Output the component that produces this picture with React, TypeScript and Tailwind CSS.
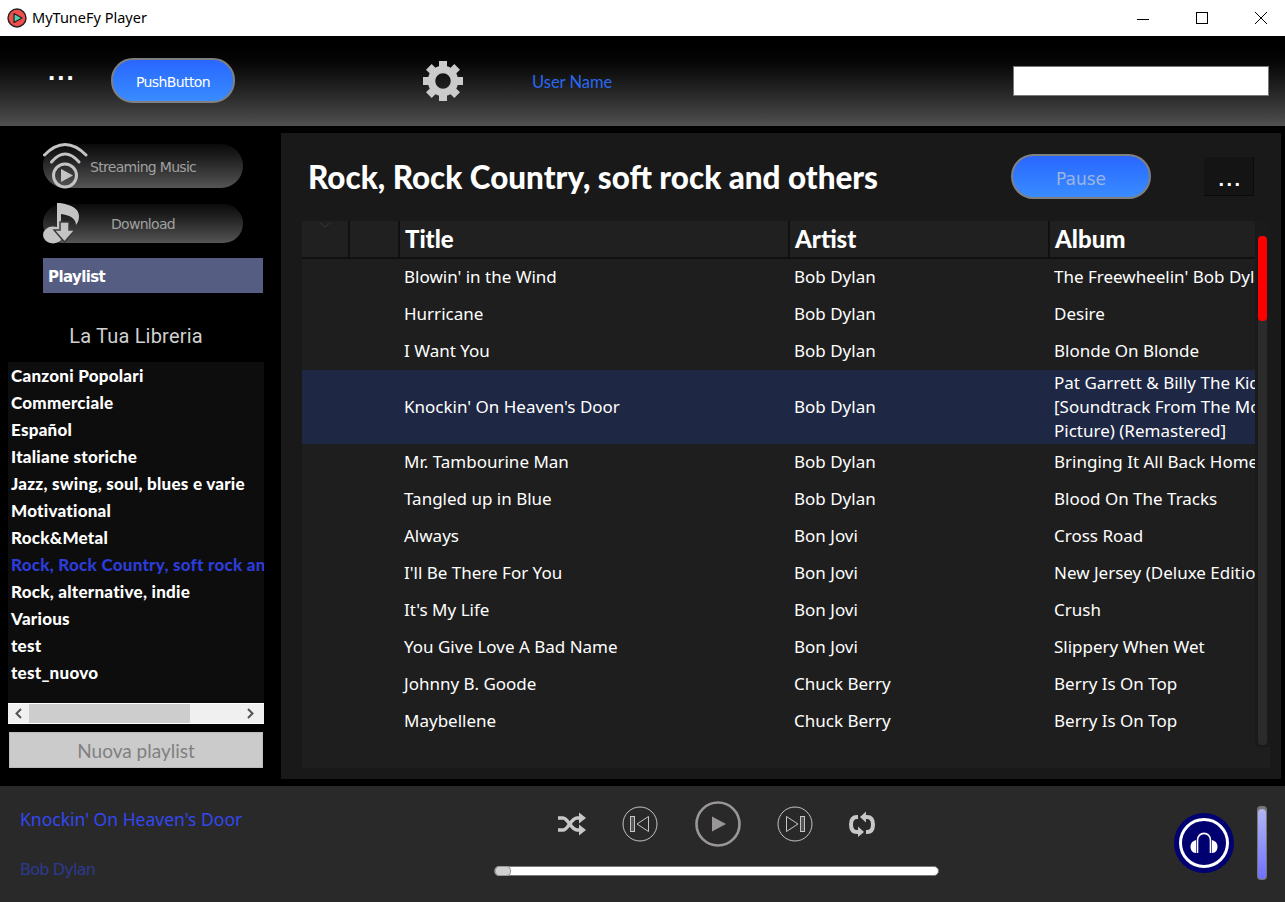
import React from "react";

const rows: { t: string; ar: string; al: React.ReactNode; sel?: boolean }[] = [
  { t: "Blowin' in the Wind", ar: "Bob Dylan", al: "The Freewheelin' Bob Dylan" },
  { t: "Hurricane", ar: "Bob Dylan", al: "Desire" },
  { t: "I Want You", ar: "Bob Dylan", al: "Blonde On Blonde" },
  {
    t: "Knockin' On Heaven's Door",
    ar: "Bob Dylan",
    al: (
      <>
        Pat Garrett &amp; Billy The Kid
        <br />
        [Soundtrack From The Motion
        <br />
        Picture) (Remastered]
      </>
    ),
    sel: true,
  },
  { t: "Mr. Tambourine Man", ar: "Bob Dylan", al: "Bringing It All Back Home" },
  { t: "Tangled up in Blue", ar: "Bob Dylan", al: "Blood On The Tracks" },
  { t: "Always", ar: "Bon Jovi", al: "Cross Road" },
  { t: "I'll Be There For You", ar: "Bon Jovi", al: "New Jersey (Deluxe Edition)" },
  { t: "It's My Life", ar: "Bon Jovi", al: "Crush" },
  { t: "You Give Love A Bad Name", ar: "Bon Jovi", al: "Slippery When Wet" },
  { t: "Johnny B. Goode", ar: "Chuck Berry", al: "Berry Is On Top" },
  { t: "Maybellene", ar: "Chuck Berry", al: "Berry Is On Top" },
];

const playlists = [
  "Canzoni Popolari",
  "Commerciale",
  "Español",
  "Italiane storiche",
  "Jazz, swing, soul, blues e varie",
  "Motivational",
  "Rock&Metal",
  "Rock, Rock Country, soft rock and others",
  "Rock, alternative, indie",
  "Various",
  "test",
  "test_nuovo",
];

const gill = "font-['Lato','Liberation_Sans',sans-serif]";
const comic = "font-['Noto_Sans','Open_Sans',sans-serif]";
const tahoma = "font-['DejaVu_Sans','Noto_Sans',sans-serif]";
const arial = "font-['Liberation_Sans',sans-serif]";

function Logo() {
  return (
    <svg width="20" height="20" viewBox="0 0 20 20">
      <circle cx="10" cy="10" r="9" fill="#f04d4d" stroke="#222" strokeWidth="1.4" />
      <path d="M7 5.5 L15 10 L7 14.5 Z" fill="#4fd0a8" stroke="#222" strokeWidth="1.2" strokeLinejoin="round" />
    </svg>
  );
}

function Gear() {
  const teeth = [0, 45, 90, 135, 180, 225, 270, 315];
  return (
    <svg width="42" height="42" viewBox="0 0 42 42" fill="#cbcbcb">
      {teeth.map((a) => (
        <rect key={a} x="17" y="1" width="8" height="11" transform={`rotate(${a} 21 21)`} />
      ))}
      <circle cx="21" cy="21" r="11.5" fill="none" stroke="#cbcbcb" strokeWidth="7.5" />
    </svg>
  );
}

function StreamIcon() {
  return (
    <svg width="46" height="46" viewBox="0 0 46 46" fill="none" stroke="#c4c4c4" className="absolute left-0 top-[-1px]">
      <path d="M1.500 12 Q22 -9 43 12" strokeWidth="3" strokeLinecap="round" />
      <path d="M8.500 19 Q22 3 36 19" strokeWidth="3" strokeLinecap="round" />
      <circle cx="22" cy="32.500" r="11.500" strokeWidth="3" />
      <path d="M18 26 L30 32.500 L18 39 Z" fill="#c4c4c4" stroke="none" />
    </svg>
  );
}

function DownloadIcon() {
  return (
    <svg width="38" height="42" viewBox="0 0 38 42" className="absolute left-0 top-[-1px]" fill="#c4c4c4">
      <path d="M14 0 H17 C24 1 36 4 36 13 C36 17 35 19 33 22 C33 15 26 12 18 11 L18 30 H14 Z" />
      <ellipse cx="10" cy="32" rx="10" ry="8.500" />
      <path d="M17 19 H26 V27 H32 L21.500 39 L11 27 H17 Z" fill="#c4c4c4" stroke="#3c3c3c" strokeWidth="1.500" />
    </svg>
  );
}

function Shuffle() {
  return (
    <svg width="28" height="24" viewBox="0 0 28 24" fill="none" stroke="#c8c8c8" strokeWidth="3.400">
      <path d="M0 6 H5 C10 6 13 18 19 18 H23" />
      <path d="M0 18 H5 C10 18 13 6 19 6 H23" />
      <path d="M21 0.500 L28 6 L21 11.500 Z" fill="#c8c8c8" stroke="none" />
      <path d="M21 12.500 L28 18 L21 23.500 Z" fill="#c8c8c8" stroke="none" />
    </svg>
  );
}

function Repeat() {
  return (
    <svg width="26" height="26" viewBox="0 0 26 26" fill="none" stroke="#c8c8c8" strokeWidth="4">
      <path d="M9 6 H8 C4 6 2 8.500 2 13.500 C2 18.500 4 21 8 21 H10" />
      <path d="M17 21 H18 C22 21 24 18.500 24 13.500 C24 8.500 22 6 18 6 H16" />
      <path d="M9 15.500 L15 21 L9 26 Z" fill="#c8c8c8" stroke="none" />
      <path d="M17 0.500 L11 6 L17 11.500 Z" fill="#c8c8c8" stroke="none" />
    </svg>
  );
}

function Prev({ flip }: { flip?: boolean }) {
  return (
    <svg width="36" height="36" viewBox="0 0 36 36" fill="none" stroke="#c4c4c4" strokeWidth="1">
      <circle cx="18" cy="18" r="17" />
      <g transform={flip ? "matrix(-1 0 0 1 36 0)" : undefined}>
        <rect x="8.500" y="10.500" width="4" height="15" fill="#555" />
        <path d="M26.500 10.500 V25.500 L15 18 Z" />
      </g>
    </svg>
  );
}

function Play() {
  return (
    <svg width="46" height="46" viewBox="0 0 46 46" fill="none">
      <circle cx="23" cy="23" r="21.500" stroke="#9a9696" strokeWidth="2.600" />
      <path d="M17 15.500 L31 23 L17 30.500 Z" fill="#9a9696" />
    </svg>
  );
}

function Headphones() {
  return (
    <svg width="60" height="60" viewBox="0 0 60 60">
      <circle cx="30" cy="30" r="30" fill="#000070" />
      <circle cx="30" cy="30" r="23.500" fill="none" stroke="#fff" strokeWidth="3" />
      <path d="M23.500 40 V27.500 C23.500 18 36.500 18 36.500 27.500 V40" fill="none" stroke="#fff" strokeWidth="1.600" />
      <path d="M22 27 V40 C18 40 16.500 36.500 16.500 33.500 C16.500 30 18.500 28 22 27 Z" fill="#fff" />
      <path d="M38 27 V40 C42 40 43.500 36.500 43.500 33.500 C43.500 30 41.500 28 38 27 Z" fill="#fff" />
    </svg>
  );
}

export default function App() {
  return (
    <div className="w-[1285px] h-[902px] overflow-hidden flex flex-col bg-black">
      {/* Title bar */}
      <div className="h-9 shrink-0 bg-white flex items-center">
        <div className="ml-[7px]"><Logo /></div>
        <span className={`ml-[5px] text-[14.5px] text-black ${comic}`}>MyTuneFy Player</span>
        <div className="ml-auto flex items-center">
          <svg width="14" height="14" viewBox="0 0 14 14" className="mr-[45px]" stroke="#000" fill="none"><path d="M1 8.500 H13" /></svg>
          <svg width="14" height="14" viewBox="0 0 14 14" className="mr-[45px]" stroke="#000" fill="none"><rect x="1.500" y="1.500" width="11" height="11" /></svg>
          <svg width="14" height="14" viewBox="0 0 14 14" className="mr-[17px]" stroke="#000" fill="none"><path d="M1 1 L13 13 M13 1 L1 13" /></svg>
        </div>
      </div>

      {/* Header */}
      <div className="h-[90px] shrink-0 bg-gradient-to-b from-black to-[#505050] flex items-center">
        <span className={`ml-[48px] w-[63px] -mt-[20px] text-white text-[26px] leading-none font-bold ${arial} tracking-[2px]`}>...</span>
        <button className={`w-[124px] h-[45px] -mt-[1px] pt-[3px] rounded-[22px] border-2 border-[#808080] bg-gradient-to-b from-[#2a66ff] to-[#3a8cff] text-white text-[14px] ${tahoma} tracking-[-0.6px]`}>
          PushButton
        </button>
        <div className="ml-[187px]"><Gear /></div>
        <span className={`ml-[68px] mt-[2px] text-[16.5px] text-[#2a68f0] ${gill}`}>User Name</span>
        <div className="ml-auto mr-4 w-[256px] h-[30px] bg-white border border-[#777]" />
      </div>

      {/* Main */}
      <div className="h-[660px] shrink-0 flex bg-black">
        {/* Sidebar */}
        <div className="w-[281px] shrink-0 flex flex-col pl-2 pt-[18px]">
          <div className="relative ml-[35px] w-[200px] h-11 rounded-[22px] bg-gradient-to-b from-[#0a0a0a] to-[#555] flex items-center">
            <StreamIcon />
            <span className={`ml-[47px] mt-[2px] text-[14px] text-[#a0a0a0] ${tahoma} tracking-[-0.7px]`}>Streaming Music</span>
          </div>
          <div className="relative ml-[35px] mt-4 w-[200px] h-[39px] rounded-[20px] bg-gradient-to-b from-[#0a0a0a] to-[#555] flex items-center justify-center">
            <DownloadIcon />
            <span className={`mt-[2px] text-[14px] text-[#a0a0a0] ${tahoma} tracking-[-0.7px]`}>Download</span>
          </div>
          <div className={`ml-[35px] mt-[15px] w-[220px] h-[35px] bg-[#565d83] flex items-center pt-[3px] pl-[5px] text-[15px] font-bold text-white ${tahoma} tracking-[-0.6px]`}>
            Playlist
          </div>
          <div className="w-[256px] mt-[30px] h-[26px] flex items-center justify-center text-[20px] text-[#d0d0d0] font-['Roboto',sans-serif] tracking-[0.2px]">
            La Tua Libreria
          </div>
          <div className="w-[256px] mt-[13px] h-[341px] bg-[#0d0d0d] overflow-hidden">
            {playlists.map((p, i) => (
              <div
                key={p}
                className={`h-[27px] flex items-center pl-[3px] whitespace-nowrap text-[17px] font-black tracking-[0.25px] ${gill} ${i === 7 ? "text-[#2c3cd8]" : "text-white"}`}
              >
                {p}
              </div>
            ))}
          </div>
          <div className="w-[256px] h-[21px] bg-[#f0f0f0] border-y border-white flex items-center">
            <svg width="21" height="19" viewBox="0 0 21 19" fill="none" stroke="#555" strokeWidth="2"><path d="M13 5 L8.500 9.500 L13 14" /></svg>
            <div className="w-[161px] h-[19px] bg-[#cdcdcd]" />
            <svg width="21" height="19" viewBox="0 0 21 19" fill="none" stroke="#555" strokeWidth="2" className="ml-auto mr-[3px]"><path d="M8 5 L12.500 9.500 L8 14" /></svg>
          </div>
          <button className={`ml-px mt-2 w-[254px] h-9 pt-[3px] bg-[#cbcbcb] border border-[#bbb] text-[#808080] text-[19px] ${gill}`}>
            Nuova playlist
          </button>
        </div>

        {/* Content panel */}
        <div className="mt-[7px] h-[646px] w-[1000px] bg-[#191919] flex flex-col">
          <div className="h-[88px] shrink-0 flex pl-[27px]">
            <h1 className={`mt-[23px] w-[703px] shrink-0 text-[31.4px] leading-[42px] font-black text-white whitespace-nowrap ${gill}`}>
              Rock, Rock Country, soft rock and others
            </h1>
            <button className={`mt-[21px] w-[140px] h-[45px] shrink-0 pt-[7px] rounded-[23px] border-2 border-[#808080] bg-gradient-to-b from-[#2a66ff] to-[#3a8cff] text-[#9db4e0] text-[17px] ${tahoma}`}>
              Pause
            </button>
            <div className={`ml-[53px] mt-[24px] w-[50px] h-[39px] shrink-0 bg-[#141414] border-r border-b border-[#0a0a0a] flex items-end justify-center pb-[6px] pl-[4px] text-white text-[20px] leading-none font-bold ${arial} tracking-[2.5px]`}>
              ...
            </div>
          </div>
          <div className="ml-[21px] w-[968px] h-[547px] bg-[#1e1e1e] flex">
            <div className="w-[953px] shrink-0 flex flex-col overflow-hidden">
              <div className={`h-[38px] shrink-0 flex bg-[#202020] border-b-2 border-[#101010] text-white text-[24px] font-black ${gill}`}>
                <div className="w-[48px] border-r-2 border-[#111] flex justify-center">
                  <svg width="14" height="8" viewBox="0 0 14 8" fill="none" stroke="#333" className="mt-px"><path d="M2 1 L7 5 L12 1" /></svg>
                </div>
                <div className="w-[50px] border-r-2 border-[#111]" />
                <div className="w-[390px] border-r-2 border-[#111] pl-[5px]">Title</div>
                <div className="w-[260px] border-r-2 border-[#111] pl-[5px]">Artist</div>
                <div className="flex-1 pl-[5px]">Album</div>
              </div>
              {rows.map((r) => (
                <div
                  key={r.t}
                  className={`flex shrink-0 items-center whitespace-nowrap text-white text-[17px] ${comic} ${r.sel ? "h-[74px] bg-[#1e2743] leading-[24px]" : "h-[37px] pb-[2px]"}`}
                >
                  <div className="w-[102px] shrink-0" />
                  <div className="w-[390px] shrink-0">{r.t}</div>
                  <div className="w-[260px] shrink-0">{r.ar}</div>
                  <div className="flex-1 min-w-0 overflow-hidden">{r.al}</div>
                </div>
              ))}
            </div>
            <div className="w-[15px] h-[526px] bg-[#1a1a1a] pl-[3px] pt-[15px]">
              <div className="w-[9px] h-[509px] rounded-[4px] bg-[#2b2b2b]">
                <div className="w-[9px] h-[85px] rounded-[4px] bg-[#ff0000]" />
              </div>
            </div>
          </div>
        </div>
      </div>

      {/* Player */}
      <div className="flex-1 bg-[#292929] flex">
        <div className="w-[494px] shrink-0 flex flex-col pl-5">
          <span className={`mt-[21px] h-6 leading-6 text-[17.5px] text-[#3348ee] ${comic}`}>Knockin' On Heaven's Door</span>
          <span className={`mt-[27px] text-[16px] leading-6 text-[#2d3990] ${tahoma} tracking-[-0.8px]`}>Bob Dylan</span>
        </div>
        <div className="w-[445px] shrink-0 flex flex-col">
          <div className="h-[46px] mt-[15px] flex items-center">
            <div className="ml-[64px] flex"><Shuffle /></div>
            <div className="ml-[36px] flex"><Prev /></div>
            <div className="ml-[37px] flex"><Play /></div>
            <div className="ml-[36px] flex"><Prev flip /></div>
            <div className="ml-[36px] flex"><Repeat /></div>
          </div>
          <div className="relative mt-[19px] h-[10px] rounded-[5px] bg-white border border-[#777]">
            <div className="absolute left-0 top-[-1px] w-[16px] h-[10px] rounded-[4px] bg-[#d0d0d0] border border-[#999]" />
          </div>
        </div>
        <div className="ml-[235px] mt-[27px]"><Headphones /></div>
        <div className="ml-[23px] mt-[20px] w-[10px] h-[74px] rounded-[4px] bg-[#777] pt-[3px] px-px">
          <div className="w-[8px] h-[70px] rounded-[4px] bg-gradient-to-b from-[#b4b4f0] to-[#7070ff]" />
        </div>
      </div>
    </div>
  );
}
